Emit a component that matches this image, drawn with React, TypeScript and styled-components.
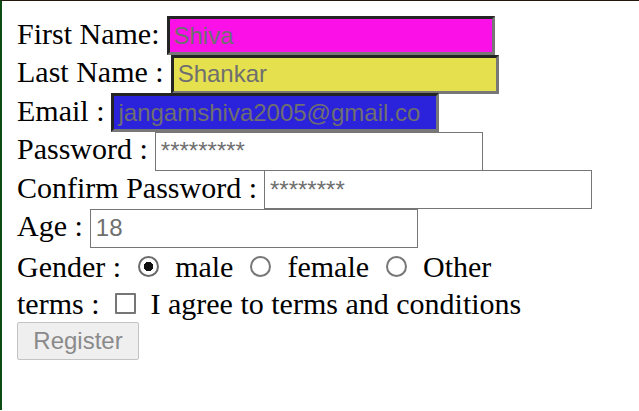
import styled, { createGlobalStyle } from "styled-components";

const GlobalStyle = createGlobalStyle`
	html, body {
		margin: 0;
		padding: 0;
		background: #ffffff;
	}
	body {
		font-family: "Liberation Serif", "Times New Roman", serif;
		color: #000000;
	}
`;

const Page = styled.div`
	min-height: 410px;
	border-top: 1px solid #24180a;
	border-left: 2px solid #0b4d12;
	padding: 15px 0 0 15px;
	box-sizing: border-box;
	font-size: 30px;
`;

const Form = styled.form`
	display: flex;
	flex-direction: column;
	align-items: flex-start;
`;

const FieldRow = styled.div`
	display: flex;
	align-items: baseline;
	height: 38.6px;
`;

const Label = styled.label`
	margin-right: 7px;
	white-space: nowrap;
`;

const TextInput = styled.input<{ $bg?: string; $thick?: boolean }>`
	box-sizing: border-box;
	width: 328px;
	height: 39px;
	padding: ${(p) => (p.$thick ? "0 3px 0 4px" : "0 5px")};
	font-family: "Liberation Sans", Arial, sans-serif;
	font-size: 24px;
	color: #6f6f6f;
	background: ${(p) => p.$bg ?? "#ffffff"};
	border-style: solid;
	border-width: ${(p) => (p.$thick ? "3px" : "1px")};
	border-color: ${(p) => (p.$thick ? "#242424 #777777 #777777 #242424" : "#767676")};
	outline: none;

	&::placeholder {
		color: #6f6f6f;
		opacity: 1;
	}
`;

const ChoiceRow = styled.div<{ $gap: number; $pad: string }>`
	display: flex;
	align-items: baseline;
	gap: ${(p) => p.$gap}px;
	padding: ${(p) => p.$pad};
	white-space: nowrap;
`;

const Radio = styled.input.attrs({ type: "radio" })`
	appearance: none;
	box-sizing: border-box;
	width: 21px;
	height: 21px;
	margin: 0 0 1px 0;
	border: 2px solid #767676;
	border-radius: 50%;
	background: #ffffff;

	&:checked {
		background: radial-gradient(circle, #111111 0 4.5px, #ffffff 5px);
		border-color: #6b6b6b;
	}
`;

const Checkbox = styled.input.attrs({ type: "checkbox" })`
	appearance: none;
	box-sizing: border-box;
	width: 21px;
	height: 21px;
	margin: 0 0 3px 0;
	border: 2px solid #767676;
	border-radius: 1px;
	background: #ffffff;
`;

const SubmitButton = styled.button`
	box-sizing: border-box;
	width: 122px;
	height: 38px;
	padding: 0;
	font-family: "Liberation Sans", Arial, sans-serif;
	font-size: 24px;
	color: #8a8a8a;
	background: #efefef;
	border: 1px solid #c3c3c3;
	border-radius: 2px;
`;

export default function App() {
	return (
		<>
			<GlobalStyle />
			<Page>
				<Form onSubmit={(e) => e.preventDefault()}>
					<FieldRow>
						<Label>First Name:</Label>
						<TextInput $thick $bg="#fc10e8" placeholder="Shiva" />
					</FieldRow>
					<FieldRow>
						<Label>Last Name :</Label>
						<TextInput $thick $bg="#e5e04d" placeholder="Shankar" />
					</FieldRow>
					<FieldRow>
						<Label>Email :</Label>
						<TextInput $thick $bg="#2b22dc" placeholder="jangamshiva2005@gmail.co" />
					</FieldRow>
					<FieldRow>
						<Label>Password :</Label>
						<TextInput type="text" placeholder="*********" />
					</FieldRow>
					<FieldRow>
						<Label>Confirm Password :</Label>
						<TextInput type="text" placeholder="********" />
					</FieldRow>
					<FieldRow>
						<Label>Age :</Label>
						<TextInput type="text" placeholder="18" />
					</FieldRow>
					<ChoiceRow $gap={16.5} $pad="2.5px 0 3px">
						<span>Gender :</span>
						<Radio name="gender" defaultChecked />
						<span>male</span>
						<Radio name="gender" />
						<span>female</span>
						<Radio name="gender" />
						<span>Other</span>
					</ChoiceRow>
					<ChoiceRow $gap={15} $pad="0 0 1px">
						<span>terms :</span>
						<Checkbox />
						<span>I agree to terms and conditions</span>
					</ChoiceRow>
					<SubmitButton type="submit" disabled>
						Register
					</SubmitButton>
				</Form>
			</Page>
		</>
	);
}
